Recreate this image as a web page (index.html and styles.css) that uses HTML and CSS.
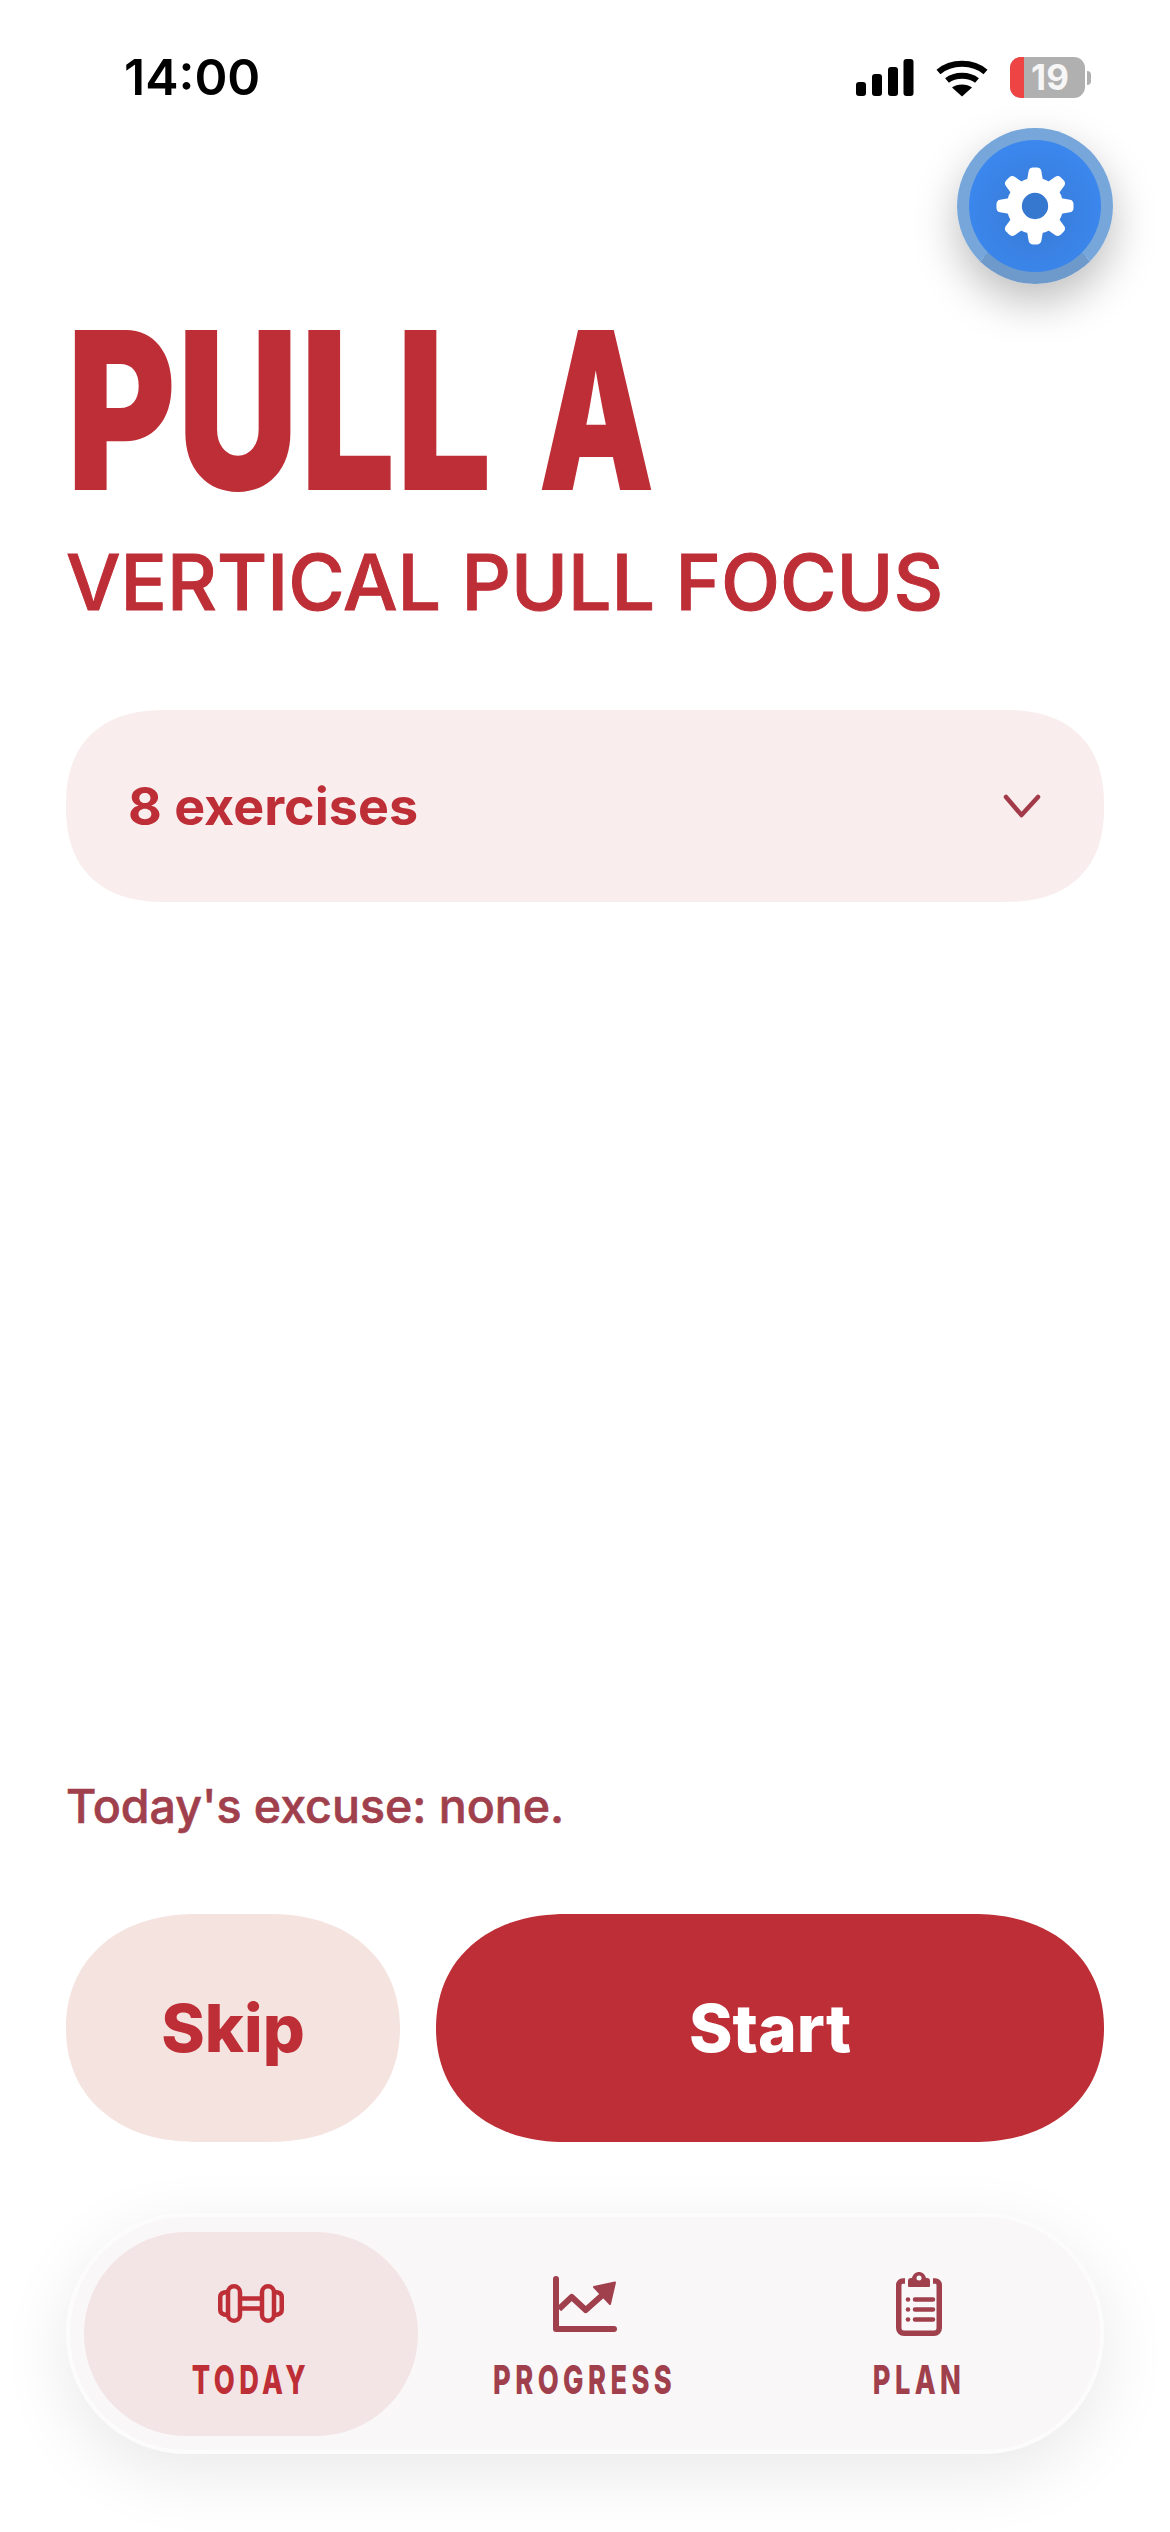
FILE: index.html
```html
<!DOCTYPE html>
<html lang="en">
<head>
<meta charset="utf-8">
<title>Pull A</title>
<link rel="stylesheet" href="styles.css">
</head>
<body>
<div class="screen">
  <header class="status">
    <span class="time">14:00</span>
    <div class="status-icons">
      <svg class="signal" width="58" height="38" viewBox="0 0 58 38"><rect x="0" y="23" width="10" height="14" rx="3"/><rect x="16" y="15" width="10" height="22" rx="3"/><rect x="32" y="8" width="10" height="29" rx="3"/><rect x="47.500" y="0" width="10" height="37" rx="3"/></svg>
      <svg class="wifi" width="52" height="38" viewBox="0 0 52 38"><path d="M2.500 13C15 2 37 2 49.500 13" fill="none" stroke="#000" stroke-width="6"/><path d="M11 21.500C19 15 33 15 41 21.500" fill="none" stroke="#000" stroke-width="6"/><path d="M26 37.500L16 28.500C21 24.500 31 24.500 36 28.500Z"/></svg>
      <div class="battery"><div class="battery-body"><span class="battery-red"></span><span class="battery-num">19</span></div><span class="battery-cap"></span></div>
    </div>
  </header>
  <div class="gear-row">
    <button class="gear-btn">
      <svg width="78" height="78" viewBox="-40 -40 80 80">
        <g fill="#fff">
          <path d="M-8.500 -24L-6.500 -36C-6 -38.500 -4 -39.500 -2 -39.500H2C4 -39.500 6 -38.500 6.500 -36L8.500 -24Z"/>
          <path transform="rotate(45)" d="M-8.500 -24L-6.500 -36C-6 -38.500 -4 -39.500 -2 -39.500H2C4 -39.500 6 -38.500 6.500 -36L8.500 -24Z"/>
          <path transform="rotate(90)" d="M-8.500 -24L-6.500 -36C-6 -38.500 -4 -39.500 -2 -39.500H2C4 -39.500 6 -38.500 6.500 -36L8.500 -24Z"/>
          <path transform="rotate(135)" d="M-8.500 -24L-6.500 -36C-6 -38.500 -4 -39.500 -2 -39.500H2C4 -39.500 6 -38.500 6.500 -36L8.500 -24Z"/>
          <path transform="rotate(180)" d="M-8.500 -24L-6.500 -36C-6 -38.500 -4 -39.500 -2 -39.500H2C4 -39.500 6 -38.500 6.500 -36L8.500 -24Z"/>
          <path transform="rotate(225)" d="M-8.500 -24L-6.500 -36C-6 -38.500 -4 -39.500 -2 -39.500H2C4 -39.500 6 -38.500 6.500 -36L8.500 -24Z"/>
          <path transform="rotate(270)" d="M-8.500 -24L-6.500 -36C-6 -38.500 -4 -39.500 -2 -39.500H2C4 -39.500 6 -38.500 6.500 -36L8.500 -24Z"/>
          <path transform="rotate(315)" d="M-8.500 -24L-6.500 -36C-6 -38.500 -4 -39.500 -2 -39.500H2C4 -39.500 6 -38.500 6.500 -36L8.500 -24Z"/>
          <circle r="29"/>
        </g>
        <circle r="13.500" fill="#3678d0"/>
      </svg>
    </button>
  </div>
  <main class="content">
    <h1 class="title"><span class="title-text">PULL <span class="title-a">A</span></span></h1>
    <p class="subtitle">VERTICAL PULL FOCUS</p>
    <div class="exercises">
      <span>8 exercises</span>
      <svg width="40" height="24" viewBox="0 0 40 24"><path d="M4 3L19.500 21L36 3" fill="none" stroke="#a23a49" stroke-width="4.500" stroke-linecap="round" stroke-linejoin="round"/></svg>
    </div>
    <div class="spacer"></div>
    <p class="excuse">Today's excuse: none.</p>
    <div class="actions">
      <button class="btn btn-skip">Skip</button>
      <button class="btn btn-start">Start</button>
    </div>
  </main>
  <nav class="tabbar">
    <div class="tab tab-active">
      <div class="tab-icon">
        <svg width="66" height="39" viewBox="0 0 66 39" fill="none" stroke="currentColor" stroke-width="4.500"><rect x="10" y="2.250" width="12" height="34.500" rx="6"/><rect x="44" y="2.250" width="12" height="34.500" rx="6"/><path d="M10 8C4 8 2.250 10 2.250 13V26C2.250 29 4 31 10 31M56 8C62 8 63.750 10 63.750 13V26C63.750 29 62 31 56 31M22 14.500H44M22 24.500H44"/></svg>
      </div>
      <span>TODAY</span>
    </div>
    <div class="tab">
      <div class="tab-icon">
        <svg width="64" height="56" viewBox="0 0 64 56" fill="currentColor"><path d="M3 3V53H61" fill="none" stroke="currentColor" stroke-width="6" stroke-linecap="round" stroke-linejoin="round"/><path d="M6 33L18.700 21L32.700 34L48.700 19.700" fill="none" stroke="currentColor" stroke-width="6" stroke-linejoin="round"/><path d="M41 11L62 6.500L57 28Z" stroke="currentColor" stroke-width="2" stroke-linejoin="round"/></svg>
      </div>
      <span>PROGRESS</span>
    </div>
    <div class="tab">
      <div class="tab-icon">
        <svg width="46" height="64" viewBox="0 0 46 64" fill="none" stroke="currentColor"><path d="M9 9H7C4 9 2.750 11 2.750 13V56C2.750 59 5 61.250 8 61.250H38C41 61.250 43.250 59 43.250 56V13C43.250 11 42 9 39 9H37" stroke-width="5.500"/><path fill="currentColor" stroke="none" fill-rule="evenodd" d="M12 14V9C12 7 13 6 15 6H16C17 2 20 0 23 0S29 2 30 6H31C33 6 34 7 34 9V14C34 15 33 15 32 15H14C13 15 12 15 12 14ZM23 3.500A2.500 2.500 0 1 0 23 8.500A2.500 2.500 0 1 0 23 3.500Z"/><path d="M19 27.500H37M19 37.500H37M19 47.500H37" stroke-width="4.500" stroke-linecap="round"/><circle cx="12" cy="27.500" r="2.300" fill="currentColor" stroke="none"/><circle cx="12" cy="37.500" r="2.300" fill="currentColor" stroke="none"/><circle cx="12" cy="47.500" r="2.300" fill="currentColor" stroke="none"/></svg>
      </div>
      <span>PLAN</span>
    </div>
  </nav>
</div>
</body>
</html>
```
FILE: styles.css
```css
* { box-sizing: border-box; }
html, body { margin: 0; padding: 0; background: #fff; }
body { font-family: Inter, "Liberation Sans", sans-serif; }
button { font-family: inherit; border: 0; padding: 0; }
.screen { width: 1170px; height: 2532px; display: flex; flex-direction: column; overflow: hidden; position: relative; background: #fff; }

.status { height: 128px; padding: 50px 79px 0 124px; display: flex; justify-content: space-between; align-items: flex-start; flex: none; }
.time { font-size: 50px; font-weight: 600; line-height: 54px; color: #000; }
.status-icons { display: flex; align-items: center; gap: 22px; padding-top: 7px; }
.signal, .wifi { display: block; }
.battery { display: flex; align-items: center; gap: 2px; }
.battery-body { width: 75px; height: 41px; border-radius: 11px; background: #b0b0b0; position: relative; overflow: hidden; display: flex; align-items: center; justify-content: center; padding-left: 5px; }
.battery-red { position: absolute; left: 0; top: 0; bottom: 0; width: 14px; background: #ef4444; }
.battery-num { position: relative; font-size: 35px; font-weight: 700; color: #f6f6f6; line-height: 1; }
.battery-cap { width: 4px; height: 14px; background: #b0b0b0; border-radius: 0 4px 4px 0; }

.gear-row { height: 0; flex: none; display: flex; justify-content: flex-end; padding-right: 57px; }
.gear-btn { width: 156px; height: 156px; flex: none; border-radius: 50%; background: radial-gradient(circle at 50% 55%, #3678d0 0, #3a82e4 45%, #3b87ee 70%); border: 12px solid #76a6da; border-bottom-color: #6d9aca; display: flex; align-items: center; justify-content: center; box-shadow: 0 18px 44px rgba(0,0,0,.26); }

.content { flex: 1; display: flex; flex-direction: column; padding: 0 66px; margin-top: 198px; }
.title { margin: 0; height: 168px; font-weight: 800; font-size: 215px; line-height: 168px; color: #be2e36; white-space: nowrap; }
.title-text { display: inline-block; margin-left: 1px; transform: scaleX(.772); transform-origin: left center; letter-spacing: 3px; word-spacing: 11px; -webkit-text-stroke: 4px #be2e36; }
.title-a { display: inline-block; transform: scaleX(.88); transform-origin: left center; }
.subtitle { margin: 44px 0 0; font-size: 77px; font-weight: 500; line-height: 88px; color: #be2e36; white-space: nowrap; -webkit-text-stroke: 1px #be2e36; }
.exercises { margin-top: 84px; height: 192px; border-radius: 100px / 96px; corner-shape: superellipse(1.25); background: #f9eded; display: flex; align-items: center; justify-content: space-between; padding: 0 62px; font-size: 52px; font-weight: 700; color: #be2e36; }
.spacer { flex: 1; }
.excuse { margin: 0; font-size: 46.500px; font-weight: 500; line-height: 54px; color: #a0404d; -webkit-text-stroke: .6px #a0404d; }
.actions { margin-top: 81px; margin-bottom: 71px; display: flex; gap: 36px; }
.btn { height: 228px; border-radius: 130px / 114px; corner-shape: superellipse(1.12); font-size: 66px; font-weight: 800; }
.btn-skip { width: 334px; background: #f5e3df; color: #be2e36; }
.btn-start { flex: 1; background: #bd2e36; color: #fff; }

.tabbar { flex: none; margin: 0 0 78px 66px; width: 1038px; height: 241px; border-radius: 120px; background: #faf7f8; border: 4px solid #fdfcfc; padding: 14.5px 14px; display: grid; grid-template-columns: repeat(3, 1fr); box-shadow: 0 20px 70px rgba(0,0,0,.09); }
.tab { display: flex; flex-direction: column; align-items: center; gap: 28px; padding-top: 39px; border-radius: 102px; color: #a0404d; }
.tab-icon { height: 66px; display: flex; align-items: center; justify-content: center; }
.tab span { font-size: 40px; font-weight: 800; letter-spacing: 6.500px; line-height: 29px; transform: scaleX(.68); white-space: nowrap; }
.tab svg { display: block; }
.tab-active { background: #f3e4e6; color: #be2e36; }
```
